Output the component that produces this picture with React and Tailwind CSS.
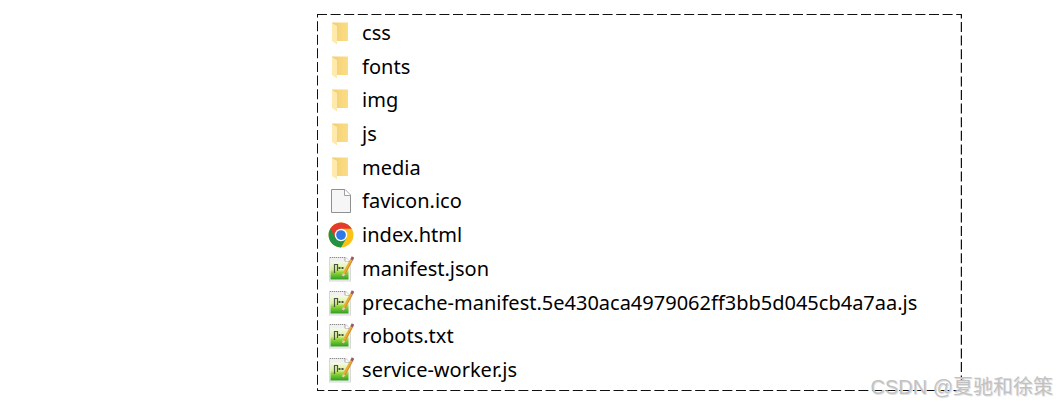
import React from "react";

const files = [
  { name: "css", type: "folder" },
  { name: "fonts", type: "folder" },
  { name: "img", type: "folder" },
  { name: "js", type: "folder" },
  { name: "media", type: "folder" },
  { name: "favicon.ico", type: "blank" },
  { name: "index.html", type: "chrome" },
  { name: "manifest.json", type: "notepad" },
  { name: "precache-manifest.5e430aca4979062ff3bb5d045cb4a7aa.js", type: "notepad" },
  { name: "robots.txt", type: "notepad" },
  { name: "service-worker.js", type: "notepad" },
];

export default function App() {
  return (
    <main className="relative flex bg-white pt-3.5 pb-3 pl-[30%] pr-[9%] font-['Noto_Sans','Noto_Sans_CJK_SC',sans-serif]">
      <div className="relative grow">
        <DashedFrame />
        <ul className="grid min-h-[377px] auto-rows-fr px-[11px] pt-0.5 pb-1">
          {files.map((file) => (
            <li key={file.name} className="flex items-center gap-2 text-xl leading-7 text-black">
              <FileIcon type={file.type} />
              <span>{file.name}</span>
            </li>
          ))}
        </ul>
      </div>
      <p className="absolute right-1 bottom-1 text-xl leading-6 text-[#c2c2c2] [text-shadow:1px_1px_0_#e2e2e2] font-['Liberation_Sans','Noto_Sans_CJK_SC',sans-serif]">
        CSDN @夏驰和徐策
      </p>
    </main>
  );
}

function DashedFrame() {
  return (
    <svg className="absolute inset-0 h-full w-full" aria-hidden="true">
      <rect width="100%" height="100%" fill="none" stroke="#111" strokeWidth="2" strokeDasharray="10 3.6" />
    </svg>
  );
}

function FileIcon({ type }) {
  if (type === "folder") return <FolderIcon />;
  if (type === "blank") return <BlankIcon />;
  if (type === "chrome") return <ChromeIcon />;
  return <NotepadIcon />;
}

function FolderIcon() {
  return (
    <svg viewBox="0 0 26 26" className="h-[26px] w-[26px] shrink-0" aria-hidden="true">
      <defs>
        <linearGradient id="folder" x1="0" y1="0" x2="1" y2="0">
          <stop offset="0" stopColor="#edcb72" />
          <stop offset="0.500" stopColor="#f7d67c" />
          <stop offset="1" stopColor="#fbdd88" />
        </linearGradient>
      </defs>
      <path d="M4 2.500H20V21H7Z" fill="url(#folder)" />
      <path d="M4 3L9 6V24.500L4 21Z" fill="#ffe9ad" />
    </svg>
  );
}

function BlankIcon() {
  return (
    <svg viewBox="0 0 26 26" className="h-[26px] w-[26px] shrink-0" aria-hidden="true">
      <path d="M3.500 1.500H17L22.500 7V24.500H3.500Z" fill="#f6f6f6" stroke="#909090" />
      <path d="M16.500 1.500V7.500H22.500" fill="#fff" stroke="#a0a0a0" />
    </svg>
  );
}

function ChromeIcon() {
  return (
    <svg viewBox="0 0 48 48" className="h-[26px] w-[26px] shrink-0" aria-hidden="true">
      <circle cx="24" cy="24" r="23" fill="#fbc116" />
      <path d="M24 24L4.100 12.500A23 23 0 0 0 24 47L34 29.700Z" fill="#229342" />
      <path d="M4.100 12.500A23 23 0 0 1 43.900 12.500H24L14 29.700Z" fill="#e33b2e" />
      <circle cx="24" cy="24" r="11.500" fill="#fff" />
      <circle cx="24" cy="24" r="9" fill="#2f78e8" />
    </svg>
  );
}

function NotepadIcon() {
  return (
    <svg viewBox="0 0 26 26" className="h-[26px] w-[26px] shrink-0" aria-hidden="true">
      <defs>
        <linearGradient id="page" x1="0" y1="0" x2="0" y2="1">
          <stop offset="0" stopColor="#f6fbea" />
          <stop offset="0.450" stopColor="#d9f08f" />
          <stop offset="0.600" stopColor="#92d838" />
          <stop offset="1" stopColor="#2d9e22" />
        </linearGradient>
      </defs>
      <path d="M1 1H18L23 5.500V25.500H1Z" fill="#d8d8d8" />
      <path d="M2 2H17L22 6V24.500H2Z" fill="#f1f1f1" />
      <path d="M2 1.500H17" stroke="#8c8c8c" strokeDasharray="1 1" />
      <path d="M17 1.500V5.500H22" fill="#fff" stroke="#a5a5a5" />
      <path d="M2.500 5.500H20.500V23.500H2.500Z" fill="url(#page)" />
      <path d="M6.500 8V17M6 8.500H9.500M9.500 8V15" fill="none" stroke="#4a5442" strokeWidth="1.200" />
      <path d="M10.500 12H12.500M13.500 12H15.500" stroke="#4a5442" strokeWidth="1.800" />
      <path d="M23.500 4L16 17.500" stroke="#ecac36" strokeWidth="2.800" />
      <path d="M24.300 4.500L17 18" stroke="#c8842a" strokeWidth="0.800" />
      <path d="M25 1L23.500 4" stroke="#9c5a64" strokeWidth="2.800" />
      <path d="M14.500 17L17.500 18.500L14 21.500Z" fill="#e9cfa6" />
      <path d="M14.200 20L15 20.500L14 21.500Z" fill="#444" />
    </svg>
  );
}
